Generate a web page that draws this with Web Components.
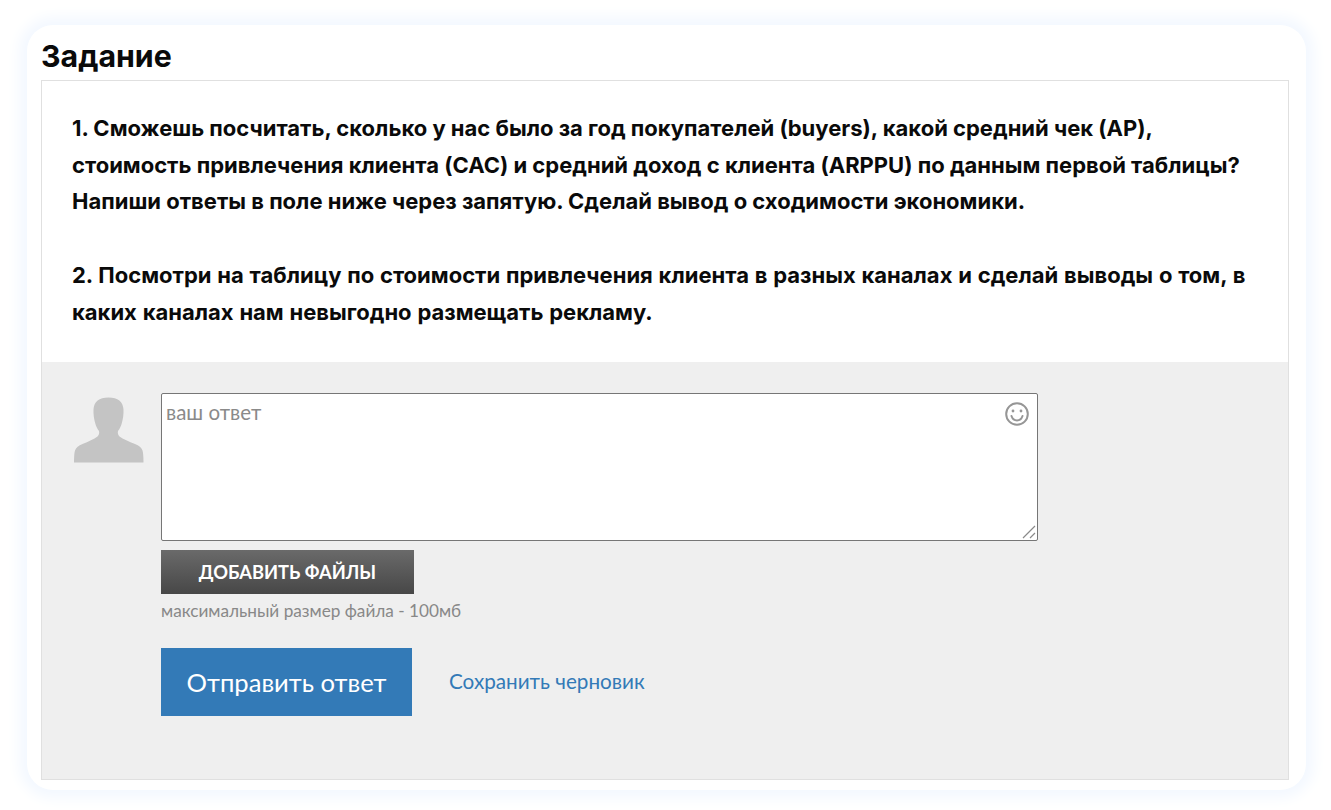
<!DOCTYPE html>
<html lang="ru">
<head>
<meta charset="utf-8">
<title>Задание</title>
<style>
  html, body { margin: 0; height: 100%; background: #fff; }
  body { font-family: "Inter", "Noto Sans", "Liberation Sans", sans-serif; overflow: hidden; }
</style>
</head>
<body>
<task-card>
  <span slot="title">Задание</span>
  <task-text>
    <p>1. Сможешь посчитать, сколько у нас было за год покупателей (buyers), какой средний чек (AP),<br>стоимость привлечения клиента (CAC) и средний доход с клиента (ARPPU) по данным первой таблицы?<br>Напиши ответы в поле ниже через запятую. Сделай вывод о сходимости экономики.</p>
    <p>2. Посмотри на таблицу по стоимости привлечения клиента в разных каналах и сделай выводы о том, в<br>каких каналах нам невыгодно размещать рекламу.</p>
  </task-text>
  <answer-form></answer-form>
</task-card>

<script>
const cardTemplate = document.createElement("template");
cardTemplate.innerHTML = `
  <style>
    :host {
      display: block;
      box-sizing: border-box;
      width: 1279px;
      height: 765px;
      margin: 25px 0 0 27px;
      padding: 11px 17px 10px 14px;
      background: #fff;
      border-radius: 26px;
      box-shadow: 0 0 14px 8px #f3f8ff;
    }
    h1 {
      margin: 0;
      height: 44px;
      font: 700 30.3px/40px "Inter", sans-serif;
      color: #0a0a0a;
    }
    .box {
      display: flex;
      flex-direction: column;
      box-sizing: border-box;
      height: 700px;
      border: 1px solid #e0e0e0;
    }
  </style>
  <h1><slot name="title"></slot></h1>
  <div class="box"><slot></slot></div>
`;

class TaskCard extends HTMLElement {
  constructor() {
    super();
    this.attachShadow({ mode: "open" });
    this.shadowRoot.appendChild(cardTemplate.content.cloneNode(true));
  }
}
customElements.define("task-card", TaskCard);

const textTemplate = document.createElement("template");
textTemplate.innerHTML = `
  <style>
    :host {
      display: block;
      box-sizing: border-box;
      height: 281px;
      padding: 29px 20px 0 30px;
      font: 700 22px/36.7px "Inter", sans-serif;
      color: #0a0a0a;
      white-space: nowrap;
    }
    ::slotted(p) {
      margin: 0 0 36.7px;
    }
    ::slotted(p:last-child) {
      word-spacing: 0.6px;
    }
  </style>
  <slot></slot>
`;

class TaskText extends HTMLElement {
  constructor() {
    super();
    this.attachShadow({ mode: "open" });
    this.shadowRoot.appendChild(textTemplate.content.cloneNode(true));
  }
}
customElements.define("task-text", TaskText);

const formTemplate = document.createElement("template");
formTemplate.innerHTML = `
  <style>
    :host {
      display: grid;
      grid-template-columns: 70px 877px;
      column-gap: 17px;
      flex: 1;
      align-content: start;
      padding: 31px 0 0 32px;
      background: #efefef;
      font-family: "Lato", "Inter", sans-serif;
    }
    .avatar { display: block; margin-top: 4px; }
    .field {
      position: relative;
      box-sizing: border-box;
      height: 148px;
      background: #fff;
      border: 1px solid #767676;
      border-radius: 2px;
    }
    textarea {
      display: block;
      box-sizing: border-box;
      width: 100%;
      height: 100%;
      padding: 6px 40px 0 4px;
      border: 0;
      outline: 0;
      resize: none;
      background: transparent;
      font: 400 20.5px/24px "Lato", sans-serif;
    }
    textarea::placeholder { color: #8a8a8a; opacity: 1; }
    .smile { position: absolute; top: 7px; right: 7px; }
    .grip { position: absolute; right: 1px; bottom: 1px; }
    .upload {
      display: flex;
      align-items: center;
      justify-content: center;
      box-sizing: border-box;
      width: 253px;
      height: 44px;
      margin-top: 9px;
      background: linear-gradient(#6a6a6a, #474747);
      color: #fff;
      font-size: 18.3px;
      font-weight: 700;
    }
    .hint {
      margin-top: 7px;
      height: 20px;
      font-size: 17.2px;
      line-height: 19px;
      color: #888;
    }
    .actions {
      display: flex;
      align-items: center;
      gap: 37px;
      margin-top: 27px;
    }
    .send {
      display: flex;
      align-items: center;
      justify-content: center;
      width: 251px;
      height: 68px;
      background: #337ab7;
      color: #fff;
      font-size: 25.600px;
    }
    .draft { color: #337ab7; font-size: 20.7px; margin-top: -2px; }
  </style>
  <svg class="avatar" width="70" height="66" viewBox="0 0 70 65" aria-hidden="true">
    <path fill="#c4c4c4" d="M34.500 0C44 0 49 4 49.500 12c.2 5-.5 9-1.500 13-1 4-2.500 6.500-4 8.500-.5 2 0 4 1.500 5.500C49 41.500 55 44 61 46.500c4 1.700 6.500 3.500 7.500 6.500.7 2.500 1 6 1 12H0c0-6 .3-9.500 1-12 1-3 3.500-4.800 7.500-6.500C14.500 44 20 41.500 23.500 39c1.500-1.500 2-3.500 1.500-5.500-1.500-2-3-4.500-4-8.500-1-4-1.700-8-1.500-13C20 4 25 0 34.500 0z"/>
  </svg>
  <div class="main">
    <div class="field">
      <textarea placeholder="ваш ответ"></textarea>
      <svg class="smile" width="26" height="26" viewBox="0 0 26 26" fill="none" stroke="#969696" stroke-width="2" aria-hidden="true">
        <circle cx="13" cy="13" r="10.800"/>
        <circle cx="9" cy="10" r="1.4" fill="#969696" stroke="none"/>
        <circle cx="17" cy="10" r="1.4" fill="#969696" stroke="none"/>
        <path d="M7.500 15c1 3 3 4.500 5.500 4.500s4.500-1.500 5.500-4.500" stroke-linecap="round"/>
      </svg>
      <svg class="grip" width="14" height="14" viewBox="0 0 14 14" stroke="#8a8a8a" stroke-width="1.200" aria-hidden="true">
        <path d="M1 13 13 1M8 13l5-5"/>
      </svg>
    </div>
    <div class="upload">ДОБАВИТЬ ФАЙЛЫ</div>
    <div class="hint">максимальный размер файла - 100мб</div>
    <div class="actions">
      <div class="send">Отправить ответ</div>
      <div class="draft">Сохранить черновик</div>
    </div>
  </div>
`;

class AnswerForm extends HTMLElement {
  constructor() {
    super();
    this.attachShadow({ mode: "open" });
    this.shadowRoot.appendChild(formTemplate.content.cloneNode(true));
  }
}
customElements.define("answer-form", AnswerForm);
</script>
</body>
</html>
